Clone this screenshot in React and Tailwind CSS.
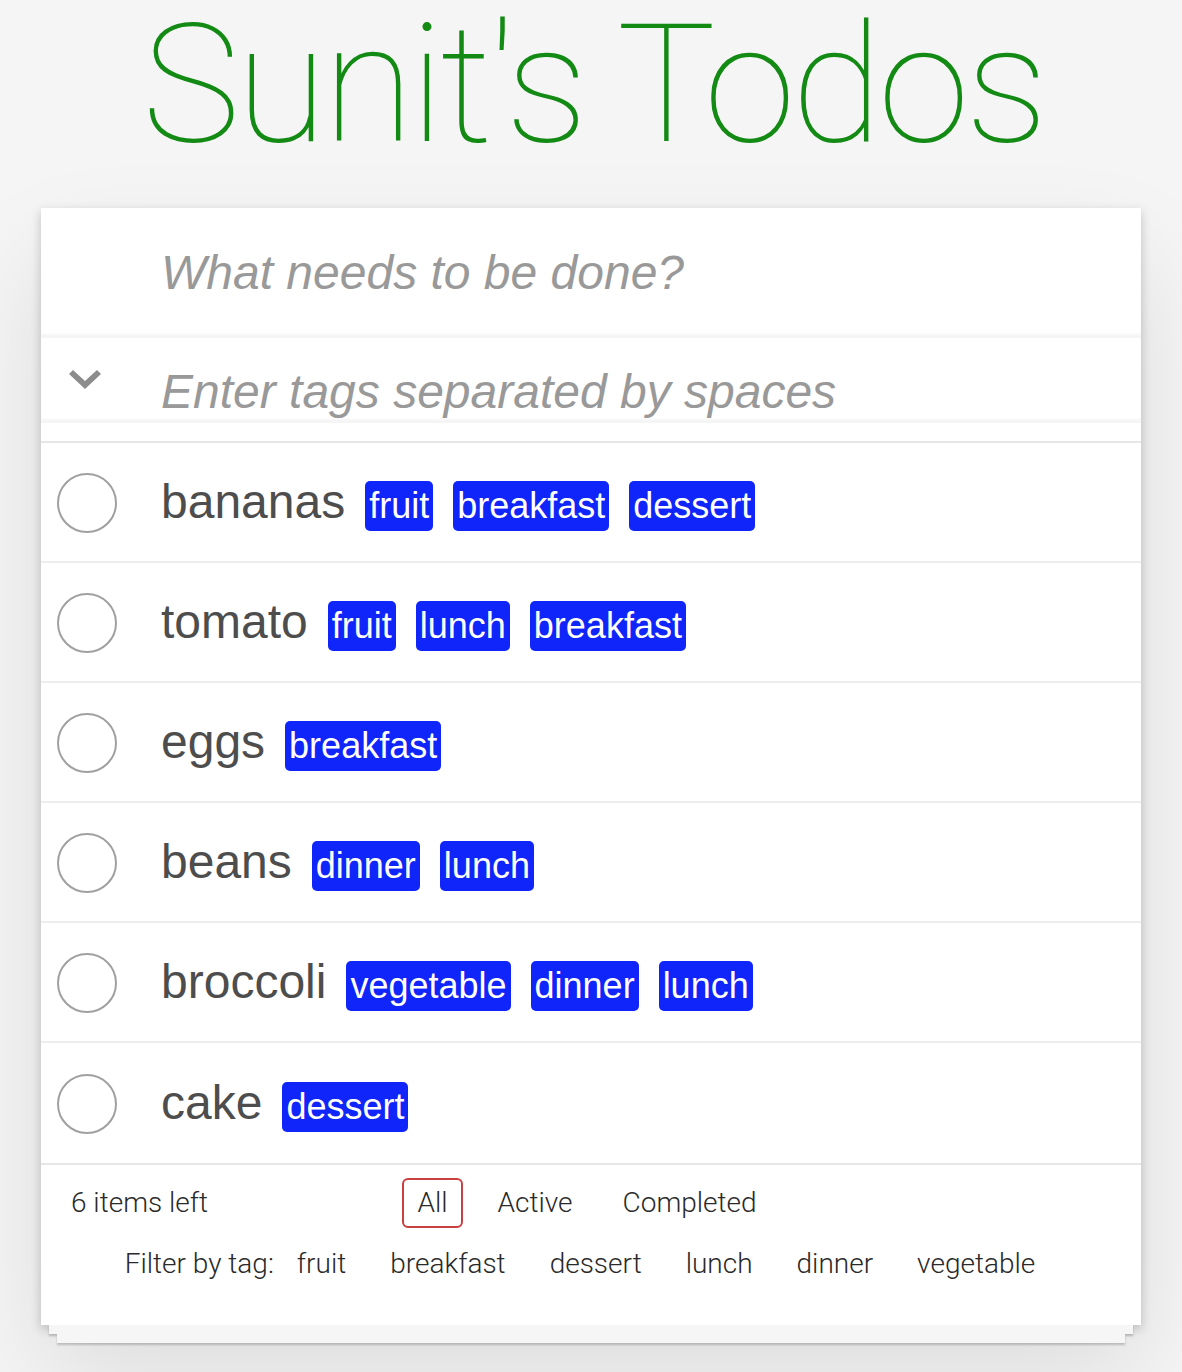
import React from 'react'

const TODOS = [
  { title: 'bananas', tags: ['fruit', 'breakfast', 'dessert'] },
  { title: 'tomato', tags: ['fruit', 'lunch', 'breakfast'] },
  { title: 'eggs', tags: ['breakfast'] },
  { title: 'beans', tags: ['dinner', 'lunch'] },
  { title: 'broccoli', tags: ['vegetable', 'dinner', 'lunch'] },
  { title: 'cake', tags: ['dessert'] },
]

const ALL_TAGS = ['fruit', 'breakfast', 'dessert', 'lunch', 'dinner', 'vegetable']

function Chevron() {
  return (
    <svg width="32" height="20" viewBox="0 0 32 20" className="block">
      <polygon points="0,4 4,0 16,11 28,0 32,4 16,19" fill="#8c8c8c" />
    </svg>
  )
}

function TodoRow({ todo, last }) {
  return (
    <div className={`flex items-center h-[120px] ${last ? '' : 'border-b-2 border-[#ededed]'}`}>
      <div className="ml-[16px] mr-[44px] mt-[2px] w-[60px] h-[60px] rounded-full border-2 border-[#a0a0a0] shrink-0" />
      <div className="text-[48px] leading-[1.2] text-[#4d4d4d] whitespace-nowrap">
        {todo.title}
        {todo.tags.map(tag => (
          <span
            key={tag}
            className="inline-block ml-[20px] px-[4px] py-[4px] text-[36px] leading-[42px] text-white bg-[#0f25fa] rounded-[5px]"
          >
            {tag}
          </span>
        ))}
      </div>
    </div>
  )
}

export default function App() {
  return (
    <div className="min-h-screen bg-[#f5f5f5] font-['Liberation_Sans',Arial,sans-serif]">
      <h1 className="h-[208px] pt-[2px] pl-[4px] text-center text-[166px] leading-none font-thin tracking-[-4px] text-[#138a14] font-['Roboto',sans-serif] whitespace-nowrap">
        Sunit's Todos
      </h1>

      <div className="mx-auto w-[1100px] bg-white shadow-[0_4px_10px_rgba(0,0,0,0.2),0_50px_100px_rgba(0,0,0,0.1)]">
        <div className="h-[130px] flex items-center pl-[120px] shadow-[inset_0_-4px_2px_rgba(0,0,0,0.04)]">
          <span className="text-[48px] leading-[1.2] italic text-[#999]">What needs to be done?</span>
        </div>
        <div className="h-[85px] flex items-start shadow-[inset_0_-4px_2px_rgba(0,0,0,0.04)]">
          <div className="w-[120px] pl-[28px] pt-[32px] shrink-0">
            <Chevron />
          </div>
          <span className="pt-[25px] text-[48px] leading-[1.2] italic text-[#999]">Enter tags separated by spaces</span>
        </div>
        <div className="h-[18px]" />
        <div className="border-t-2 border-[#e6e6e6]">
          {TODOS.map((todo, i) => (
            <TodoRow key={todo.title} todo={todo} last={i === TODOS.length - 1} />
          ))}
        </div>
        <div className="border-t-2 border-[#e6e6e6] px-[30px] pt-[13px] pb-[44px] font-['Roboto',sans-serif] font-light text-[28px] text-[#2a2a2a]">
          <div className="grid grid-cols-[1fr_auto_1fr] items-center h-[50px]">
            <span>6 items left</span>
            <div className="flex items-center gap-[20px] -ml-[8px]">
              <span className="px-[13px] py-[6px] leading-[34px] border-2 border-[#c94040] rounded-[6px]">All</span>
              <span className="px-[13px] py-[6px] leading-[34px] border-2 border-transparent">Active</span>
              <span className="px-[13px] py-[6px] leading-[34px] border-2 border-transparent">Completed</span>
            </div>
            <span />
          </div>
          <div className="mt-[19px] flex justify-center leading-[34px]">
            <span className="mr-[1px]">Filter by tag:</span>
            {ALL_TAGS.map(tag => (
              <span key={tag} className="px-[22px]">{tag}</span>
            ))}
          </div>
        </div>
      </div>
      <div className="mx-auto w-[1084px] h-[9px] bg-[#f6f6f6] shadow-[0_2px_2px_rgba(0,0,0,0.2)]" />
      <div className="mx-auto w-[1068px] h-[9px] bg-[#f6f6f6] shadow-[0_2px_2px_rgba(0,0,0,0.2)]" />
    </div>
  )
}
